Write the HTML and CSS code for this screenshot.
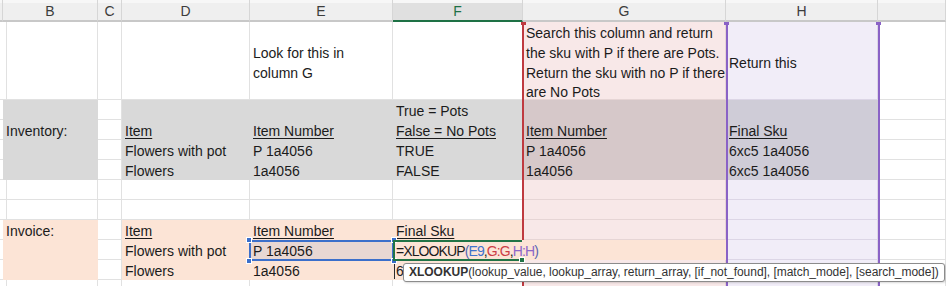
FILE: index.html
```html
<!DOCTYPE html>
<html>
<head>
<meta charset="utf-8">
<link rel="stylesheet" href="styles.css">
</head>
<body>
<div class="sheet">
  <div class="row">
    <div class="hd"></div><div class="hd">B</div><div class="hd">C</div><div class="hd">D</div><div class="hd">E</div><div class="hd sel">F</div><div class="hd">G</div><div class="hd">H</div><div class="hd"></div>
  </div>
  <div class="row">
    <div class="c"></div><div class="c"></div><div class="c"></div><div class="c"></div>
    <div class="c mid"><span>Look for this in<br>column G</span></div>
    <div class="c"></div>
    <div class="c g mid"><span>Search this column and return<br>the sku with P if there are Pots.<br>Return the sku with no P if there<br>are No Pots</span></div>
    <div class="c h mid"><span>Return this</span></div>
    <div class="c"></div>
  </div>
  <div class="row">
    <div class="c"></div><div class="c gray"></div><div class="c"></div><div class="c gray"></div><div class="c gray"></div>
    <div class="c gray">True = Pots</div>
    <div class="c gg"></div><div class="c hg"></div><div class="c"></div>
  </div>
  <div class="row">
    <div class="c"></div><div class="c gray">Inventory:</div><div class="c"></div>
    <div class="c gray"><span class="u">Item</span></div>
    <div class="c gray"><span class="u">Item Number</span></div>
    <div class="c gray"><span class="u">False = No Pots</span></div>
    <div class="c gg"><span class="u">Item Number</span></div>
    <div class="c hg"><span class="u">Final Sku</span></div>
    <div class="c"></div>
  </div>
  <div class="row">
    <div class="c"></div><div class="c gray"></div><div class="c"></div>
    <div class="c gray">Flowers with pot</div>
    <div class="c gray">P 1a4056</div>
    <div class="c gray">TRUE</div>
    <div class="c gg">P 1a4056</div>
    <div class="c hg">6xc5 1a4056</div>
    <div class="c"></div>
  </div>
  <div class="row">
    <div class="c"></div><div class="c gray"></div><div class="c"></div>
    <div class="c gray">Flowers</div>
    <div class="c gray">1a4056</div>
    <div class="c gray">FALSE</div>
    <div class="c gg">1a4056</div>
    <div class="c hg">6xc5 1a4056</div>
    <div class="c"></div>
  </div>
  <div class="row">
    <div class="c"></div><div class="c"></div><div class="c"></div><div class="c"></div><div class="c"></div><div class="c"></div><div class="c g"></div><div class="c h"></div><div class="c"></div>
  </div>
  <div class="row">
    <div class="c"></div><div class="c"></div><div class="c"></div><div class="c"></div><div class="c"></div><div class="c"></div><div class="c g"></div><div class="c h"></div><div class="c"></div>
  </div>
  <div class="row">
    <div class="c"></div><div class="c peach">Invoice:</div><div class="c"></div>
    <div class="c peach"><span class="u">Item</span></div>
    <div class="c peach"><span class="u">Item Number</span></div>
    <div class="c peach"><span class="u">Final Sku</span></div>
    <div class="c g"></div><div class="c h"></div><div class="c"></div>
  </div>
  <div class="row">
    <div class="c"></div><div class="c peach"></div><div class="c"></div>
    <div class="c peach">Flowers with pot</div>
    <div class="c esel">P 1a4056</div>
    <div class="c peach edit-txt formula">=XLOOKUP<span class="par">(</span><span class="r1">E9</span>,<span class="r2">G:G</span>,<span class="r3">H:H</span><span class="par">)</span></div>
    <div class="c gp edit"></div><div class="c h"></div><div class="c"></div>
  </div>
  <div class="row">
    <div class="c"></div><div class="c peach"></div><div class="c"></div>
    <div class="c peach">Flowers</div>
    <div class="c peach">1a4056</div>
    <div class="c peach f10">6</div>
    <div class="c g"></div><div class="c h"></div><div class="c"></div>
  </div>
  <div class="row">
    <div class="c"></div><div class="c"></div><div class="c"></div><div class="c"></div><div class="c"></div><div class="c"></div><div class="c g"></div><div class="c h"></div><div class="c"></div>
  </div>

  <div class="rng-g"></div>
  <div class="rng-h"></div>
  <div class="box-e"><span class="hdl tl"></span><span class="hdl tr"></span><span class="hdl bl"></span><span class="hdl br"></span></div>
  <div class="box-f"></div>
  <div class="tip"><b>XLOOKUP</b>(lookup_value, lookup_array, return_array, [if_not_found], [match_mode], [search_mode])</div>
</div>
</body>
</html>
```

FILE: styles.css
```css
* { box-sizing: border-box; }
html, body { margin: 0; background: #fff; overflow: hidden; }

.sheet {
  display: grid;
  grid-template-columns: 3px 95px 24px 128px 143px 130px 203px 152px 68px;
  grid-template-rows: 22px 78px repeat(10, 20px);
  position: relative;
  width: 946px;
  height: 286px;
  overflow: hidden;
  font-family: "Liberation Sans", Arial, sans-serif;
  font-size: 14px;
  color: #1b1b1b;
}

.row { display: contents; }

.hd {
  background: linear-gradient(#f7f7f7 0 3px, #efefef 3px);
  border-right: 1px solid #d6d6d6;
  border-bottom: 2px solid #c8c8c8;
  text-align: center;
  line-height: 20px;
  padding-top: 1px;
  color: #3c3c3c;
}
.hd.sel {
  background: linear-gradient(#f7f7f7 0 3px, #e0e0e0 3px);
  color: #1e7145;
  border-bottom-color: #1e7145;
}

.c {
  border-right: 1px solid #e1e1e1;
  border-bottom: 1px solid #e1e1e1;
  padding: 1px 3px 0;
  line-height: 20px;
  white-space: nowrap;
  min-width: 0;
}

.mid {
  display: flex;
  flex-direction: column;
  justify-content: center;
  white-space: nowrap;
  line-height: 19.6px;
  padding-top: 6px;
  padding-bottom: 0;
}

.gray { background: #d9d9d9; border-color: #d9d9d9; }
.peach { background: #fce4d6; border-color: #fce4d6; }
.g { background: #f8e8e8; border-color: #e6d5d5; }
.gg { background: #d6c8c9; border-color: #d6c8c9; }
.gp { background: #fce4d6; border-color: #fce4d6; }
.h { background: #f1edf8; border-color: #dcd6e6; }
.hg { background: #cfccd7; border-color: #cfccd7; }

.esel { background: #e8d7d3; border-color: #e8d7d3; }
.edit { position: relative; z-index: 4; }
.edit-txt { position: relative; z-index: 5; overflow: visible; }
.formula { letter-spacing: -0.9px; }
.f10 {
  background: linear-gradient(90deg, transparent 1px, #2b2b2b 1px 2px, transparent 2px), #fce4d6;
}

.u { text-decoration: underline; text-underline-offset: 2px; }

.par { color: #5866b0; }
.r1 { color: #3f72cc; }
.r2 { color: #cc3d46; }
.r3 { color: #8d67c9; }

/* range highlights */
.rng-g {
  position: absolute;
  grid-column: 7 / 8;
  grid-row: 2 / 13;
  top: 0; bottom: 0; left: -1px; right: 0;
  border-left: 2px solid #bf3a40;
  pointer-events: none;
  z-index: 3;
}
.rng-g::before {
  content: "";
  position: absolute;
  left: -3px; top: 0;
  width: 5px; height: 3px;
  background: #bf3a40;
}
.rng-h {
  position: absolute;
  grid-column: 8 / 9;
  grid-row: 2 / 13;
  top: 0; bottom: 0; left: 0; right: -2px;
  border-left: 2px solid #8a62c6;
  border-right: 2px solid #8a62c6;
  pointer-events: none;
  z-index: 3;
}
.rng-h::before, .rng-h::after {
  content: "";
  position: absolute;
  top: 0;
  width: 5px; height: 3px;
  background: #8a62c6;
}
.rng-h::before { left: -4px; }
.rng-h::after { right: -3px; }

.box-e {
  position: absolute;
  grid-column: 5 / 6;
  grid-row: 10 / 11;
  top: 0; bottom: -1px; left: -1px; right: -1px;
  border: 2px solid #3b6fcb;
  z-index: 6;
  pointer-events: none;
}
.hdl {
  position: absolute;
  width: 4px; height: 4px;
  background: #3b6fcb;
  border: 1px solid #fff;
  box-sizing: content-box;
}
.hdl.tl { left: -5px; top: -5px; }
.hdl.tr { right: -5px; top: -5px; }
.hdl.bl { left: -5px; bottom: -5px; }
.hdl.br { right: -5px; bottom: -5px; }

.box-f {
  position: absolute;
  grid-column: 6 / 7;
  grid-row: 10 / 11;
  top: 0; bottom: -1px; left: 0; right: 1px;
  border: 2px solid #217346;
  border-right: 0;
  z-index: 6;
  pointer-events: none;
}
.box-f::after {
  content: "";
  position: absolute;
  right: -3px; bottom: -4px;
  width: 4px; height: 4px;
  background: #217346;
  border: 1px solid #fff;
  box-sizing: content-box;
}

.tip {
  position: absolute;
  grid-column: 6 / 10;
  grid-row: 11 / 12;
  left: 10px;
  top: 3px;
  height: 19px;
  padding: 0 5px;
  background: #fff;
  border: 1px solid #8c8c8c;
  border-radius: 3px;
  box-shadow: 1px 1px 2px rgba(0,0,0,0.15);
  font-size: 12px;
  line-height: 17px;
  letter-spacing: -0.03px;
  white-space: nowrap;
  color: #333;
  z-index: 7;
}
.tip b { font-weight: bold; }
```
